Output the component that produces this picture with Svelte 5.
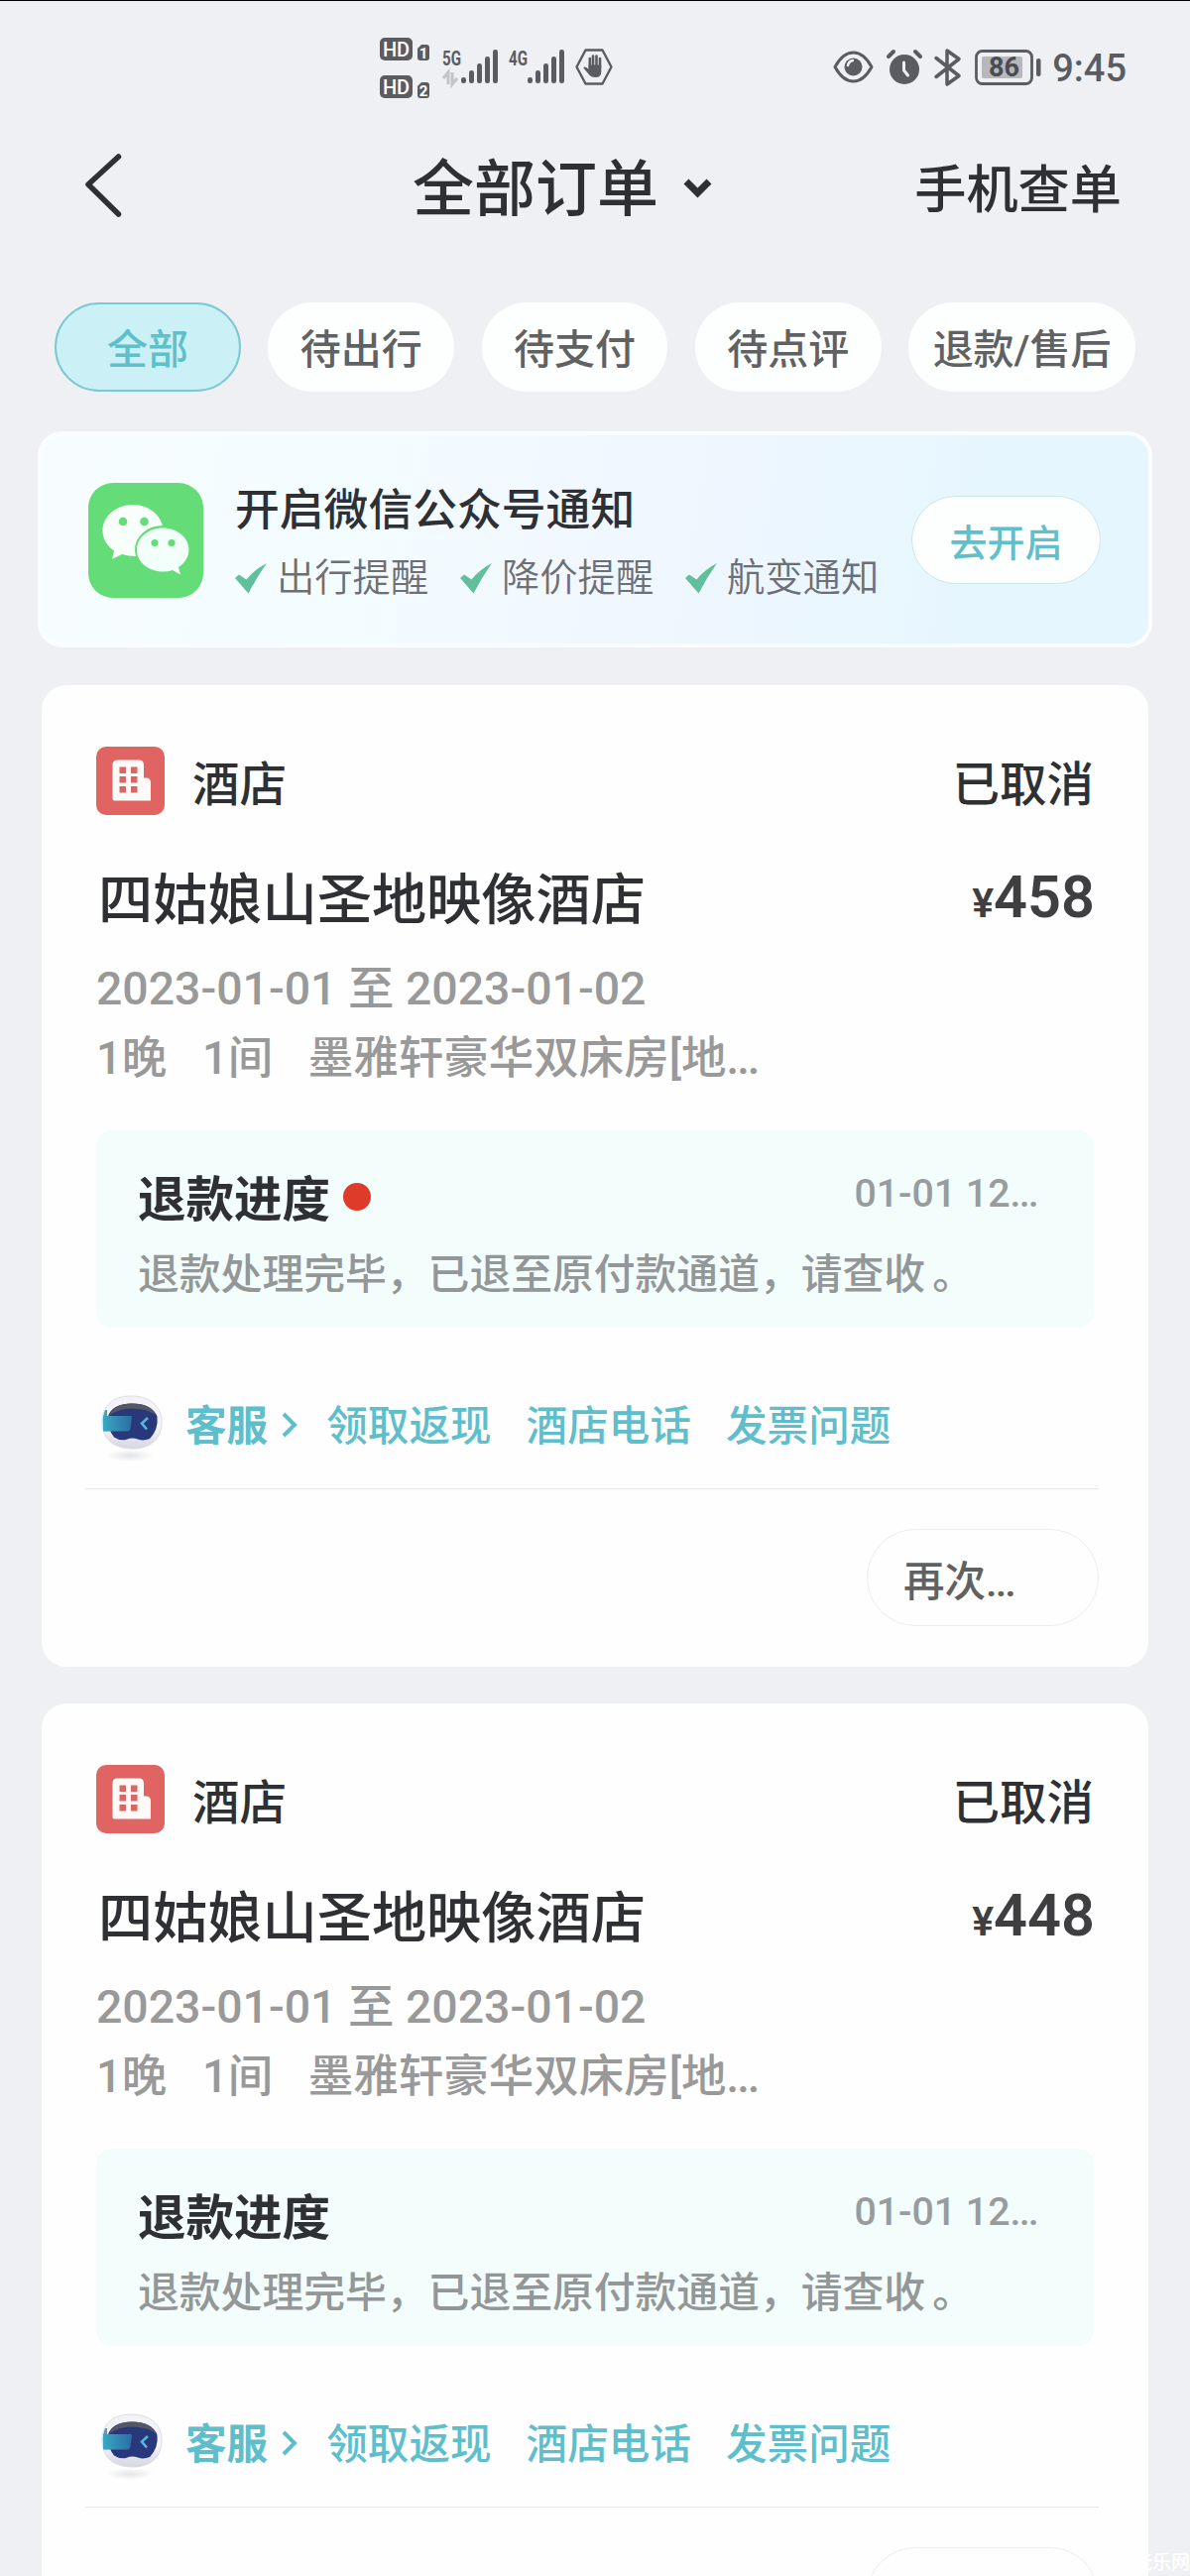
<script>
  let activeTab = 0;

  const tabs = ['全部', '待出行', '待支付', '待点评', '退款/售后'];
  const notices = ['出行提醒', '降价提醒', '航变通知'];
  const links = ['领取返现', '酒店电话', '发票问题'];

  const orders = [
    { id: 1, price: 458, unread: true },
    { id: 2, price: 448, unread: false }
  ];

  const bars = [0, 1, 2, 3, 4];
</script>

<div class="page">
  <div class="status">
    <div class="hd-col">
      {#each [1, 2] as sim}
        <svg width="50" height="24" viewBox="0 0 50 24">
          <rect x="0" y="0" width="33" height="23" rx="5" fill="#5b5c62" />
          <text x="16.5" y="18.5" text-anchor="middle" class="hd-text">HD</text>
          <path d="M38 11l4-4h5q3 0 3 3v10q0 3-3 3h-6q-3 0-3-3z" fill="#5b5c62" />
          <text x="44" y="20.5" text-anchor="middle" class="sim-text">{sim}</text>
        </svg>
      {/each}
    </div>
    {#each ['5G', '4G'] as net, n}
      <svg class="signal" class:second={n === 1} width="56" height="37" viewBox="0 0 56 37">
        <text x="0" y="16.5" class="net-text" textLength="19" lengthAdjust="spacingAndGlyphs">{net}</text>
        {#if n === 0}
          <path d="M1 30l5-6v12M10 24v12l5-6" fill="none" stroke="#c3c4c9" stroke-width="3" />
        {/if}
        {#each bars as b}
          <rect
            x={19 + b * 8}
            y={[29, 22, 15, 8, 1][b]}
            width="5"
            height={[6, 13, 20, 27, 34][b]}
            rx="2.3"
            fill="#5b5c62"
          />
        {/each}
      </svg>
    {/each}
    <svg class="hand" width="38" height="37" viewBox="0 0 38 37">
      <path d="M10.500 1.500h17l9 17-9 17h-17l-9-17z" fill="none" stroke="#5b5c62" stroke-width="2.400" stroke-linejoin="round" />
      <path d="M14.800 19V10M18 18V7.500M21.500 18V7.500M25 19v-9" stroke="#5b5c62" stroke-width="2.600" stroke-linecap="round" />
      <path d="M13.500 16.500h12.800v7q0 5.500-6 5.500-4.500 0-6.500-3l-5.500-6.500q1-1.700 3-.5l2.200 1.800z" fill="#5b5c62" />
    </svg>

    <div class="status-right">
      <svg class="eye" width="41" height="33" viewBox="0 0 41 33">
        <path d="M2 16.500Q10 2 20.500 2T39 16.500Q31 31 20.500 31T2 16.500z" fill="none" stroke="#5b5c62" stroke-width="3" stroke-linejoin="round" />
        <circle cx="20.500" cy="16.500" r="9" fill="#5b5c62" />
        <path d="M15 15q1-4.500 5-5" fill="none" stroke="#eeeff4" stroke-width="2.500" stroke-linecap="round" />
      </svg>
      <svg class="alarm" width="36" height="36" viewBox="0 0 36 36">
        <circle cx="18" cy="20" r="15" fill="#5b5c62" />
        <path d="M2 7l5-5M34 7l-5-5" stroke="#5b5c62" stroke-width="4" stroke-linecap="round" />
        <path d="M17.500 13v8l4 5" fill="none" stroke="#eeeff4" stroke-width="3" stroke-linecap="round" />
      </svg>
      <svg class="bluetooth" width="28" height="38" viewBox="0 0 28 38">
        <path d="M2 9.500l23 18-12 8.500V2l12 8.500L2 28.500" fill="none" stroke="#5b5c62" stroke-width="3.500" stroke-linejoin="round" stroke-linecap="round" />
      </svg>
      <svg class="battery" width="68" height="36" viewBox="0 0 68 36">
        <rect x="1.500" y="1.500" width="56" height="33" rx="6" fill="none" stroke="#5b5c62" stroke-width="2.800" />
        <rect x="7" y="7" width="41" height="22" rx="2" fill="#b7b8bc" />
        <text x="29.500" y="27" text-anchor="middle" class="battery-text">86</text>
        <rect x="62" y="9" width="4.500" height="18" rx="2" fill="#5b5c62" />
      </svg>
      <span class="time">9:45</span>
    </div>
  </div>

  <header>
    <svg class="back" width="38" height="66" viewBox="0 0 38 66">
      <path d="M34.500 4L4 32l30.500 30" fill="none" stroke="#2f3034" stroke-width="5.500" stroke-linecap="round" stroke-linejoin="round" />
    </svg>
    <div class="title">
      <h1>全部订单</h1>
      <svg width="30" height="22" viewBox="0 0 30 22">
        <path d="M3 4l11.500 11.500L26 4" fill="none" stroke="#2f3034" stroke-width="7" />
      </svg>
    </div>
    <span class="lookup">手机查单</span>
  </header>

  <nav>
    {#each tabs as tab, i}
      <button class="tab" class:active={activeTab === i} class:wide={i === 4} on:click={() => (activeTab = i)}>{tab}</button>
    {/each}
  </nav>

  <section class="banner">
    <svg class="wechat" width="116" height="116" viewBox="0 0 116 116">
      <rect width="116" height="116" rx="25" fill="#64dc78" />
      <path d="M45 22C28 22 14.500 33.500 14.500 48.500c0 8 4.500 15 11.500 20L24 77l10-5q6 2 14 2 28-3 28-25C75 33.500 62 22 45 22z" fill="#f8fffb" />
      <ellipse cx="75" cy="67.500" rx="28" ry="24.500" fill="#64dc78" />
      <path d="M75 45.500c-14 0-26 9.500-26 22s12 22 26 22q6 0 10-1.500l8 4.500-2-7.500c6-4 10.500-10 10.500-17.500 0-12.500-12-22-26.500-22z" fill="#f3fffb" />
      <g fill="#64dc78">
        <circle cx="35" cy="39" r="4.300" />
        <circle cx="56.500" cy="39" r="4.300" />
        <circle cx="67" cy="60.500" r="3.600" />
        <circle cx="84" cy="60.500" r="3.600" />
      </g>
    </svg>
    <div class="banner-body">
      <h2>开启微信公众号通知</h2>
      <div class="notices">
        {#each notices as notice}
          <span class="notice">
            <svg width="34" height="32" viewBox="0 0 34 32">
              <path d="M0 16l4-3.500 7.500 5Q20 7 32 1 22 15 13.500 31.500z" fill="#62bf9b" />
            </svg>
            {notice}
          </span>
        {/each}
      </div>
    </div>
    <button class="open">去开启</button>
  </section>

  <main>
    {#each orders as order (order.id)}
      <article class="card">
        <div class="row kind">
          <svg width="69" height="69" viewBox="0 0 69 69">
            <rect width="69" height="69" rx="10" fill="#df6462" />
            <path d="M16.500 18.500q0-5 5-5H43q5 0 5 5v13h2q5 0 5 5v18H18.500q-2 0-2-2z" fill="#fffaf8" />
            <g fill="#d76664">
              {#each [20.5, 30, 40] as y}
                <rect x="23.5" {y} width="6.5" height="6.5" />
                <rect x="35" {y} width="6.5" height="6.5" />
              {/each}
            </g>
          </svg>
          <span class="label">酒店</span>
          <span class="end label">已取消</span>
        </div>
        <div class="row name">
          <h3>四姑娘山圣地映像酒店</h3>
          <span class="end price"><small>¥</small>{order.price}</span>
        </div>
        <p class="dates">2023-01-01 至 2023-01-02</p>
        <p class="room">
          <span>1晚</span><span>1间</span><span>墨雅轩豪华双床房[地<span class="more-dots">...</span></span>
        </p>

        <div class="refund">
          <div class="row">
            <h4>退款进度</h4>
            {#if order.unread}
              <i class="dot"></i>
            {/if}
            <span class="end when">01-01 12<span class="more-dots">...</span></span>
          </div>
          <p>退款处理完毕，已退至原付款通道，请查收<span class="stop">。</span></p>
        </div>

        <div class="row links">
          <svg class="robot" width="70" height="72" viewBox="0 0 70 72">
            <defs>
              <linearGradient id="shell{order.id}" x1="0" y1="0" x2="0" y2="1">
                <stop offset="0" stop-color="#f3f3f7" />
                <stop offset=".6" stop-color="#f4f4f8" />
                <stop offset="1" stop-color="#d5d6df" />
              </linearGradient>
              <radialGradient id="shade{order.id}">
                <stop offset="0" stop-color="#e4e4e8" />
                <stop offset="1" stop-color="#fefefe" />
              </radialGradient>
              <linearGradient id="visor{order.id}" x1="0" x2="1">
                <stop offset="0" stop-color="#3aa8c1" />
                <stop offset="1" stop-color="#2b6da3" />
              </linearGradient>
            </defs>
            <ellipse cx="34" cy="62" rx="24" ry="6" fill="url(#shade{order.id})" />
            <path d="M35 2C55 2 66 13 66 28 66 45 55 55 37 55 18 55 7 46 6 30 5 12 17 2 35 2z" fill="url(#shell{order.id})" stroke="#dcdde5" />
            <path d="M36 9.500q20 0 25.500 13 1.500 13-7.500 22.500-6 2.500-12 .5-6-2-12 .5-7 1-12-2.500-7-9-6.500-20 4-14 24.500-14z" fill="#29377b" />
            <path d="M13 22q5-12.500 23-12.500 18 0 25 12-10-7-25-7-14 0-23 7.500z" fill="#555765" />
            <path d="M9 16q-4 10-1 20l3 2V16z" fill="#3ea6bc" />
            <path d="M7 22h27.500q2 0 1.500 2l-1.500 10.500q-.5 3-3 3H7z" fill="url(#visor{order.id})" />
            <path d="M52 24l-6 5.500 5 6" fill="none" stroke="#52b7dd" stroke-width="2.600" />
          </svg>
          <b>客服</b>
          <svg class="more" width="18" height="28" viewBox="0 0 18 28">
            <path d="M3 3l11 11L3 25" fill="none" stroke="#5fbecb" stroke-width="4" />
          </svg>
          {#each links as link}
            <a href="#{link}">{link}</a>
          {/each}
        </div>

        <div class="actions">
          <button>再次<span class="more-dots">...</span></button>
        </div>
      </article>
    {/each}
  </main>
  <span class="mark">玩乐网</span>
</div>

<style>
  :global(body) {
    background: #eff0f4;
  }

  .page {
    position: relative;
    width: 1200px;
    height: 2598px;
    overflow: hidden;
    box-sizing: border-box;
    border-top: 1px solid #000;
    background: #eff0f4;
    color: #2f3034;
    font-family: Roboto, 'Noto Sans CJK SC', sans-serif;
    font-weight: 500;
  }

  h1, h2, h3, h4, p {
    margin: 0;
    font-weight: 500;
  }

  svg {
    display: block;
    flex: none;
    overflow: visible;
  }

  button {
    font-family: inherit;
    font-weight: inherit;
    padding: 0;
    box-sizing: border-box;
  }

  .row {
    display: flex;
    align-items: center;
  }

  .end {
    margin-left: auto;
  }

  /* tighter than the font's own full stops */
  .more-dots {
    letter-spacing: -0.045em;
  }

  .status {
    display: flex;
    align-items: center;
    height: 133px;
    padding-left: 383px;
  }

  .hd-col {
    display: grid;
    gap: 14px;
    margin: 2px 13px 0 0;
  }

  .hd-text {
    font: 500 20px Roboto, sans-serif;
    fill: #fff;
  }

  .sim-text {
    font: 700 15px Roboto, sans-serif;
    fill: #fff;
  }

  .net-text {
    font: 700 21px Roboto, sans-serif;
    fill: #5b5c62;
  }

  .signal.second {
    margin-left: 11px;
  }

  .hand {
    margin-left: 11px;
  }

  .status-right {
    display: flex;
    align-items: center;
    margin-left: auto;
    padding-right: 64px;
    color: #5b5c62;
  }

  .alarm {
    margin-left: 13px;
  }

  .bluetooth {
    margin-left: 12px;
  }

  .battery {
    margin-left: 13px;
  }

  .battery-text {
    font: 700 27px Roboto, sans-serif;
    fill: #4b4c51;
  }

  .time {
    margin-left: 10px;
    padding-top: 2px;
    font-size: 38px;
    line-height: 44px;
  }

  header {
    display: flex;
    align-items: center;
    height: 112px;
    padding: 0 69px 0 85px;
  }

  .back {
    margin-bottom: 6px;
  }

  .title {
    display: flex;
    align-items: center;
    gap: 25px;
    margin-left: 293px;
  }

  h1 {
    padding-top: 4px;
    font-size: 62px;
    line-height: 80px;
  }

  .lookup {
    margin-left: auto;
    padding-top: 6px;
    font-size: 52.2px;
    line-height: 70px;
  }

  nav {
    display: flex;
    gap: 27.5px;
    padding: 59px 55px 0;
  }

  .tab {
    width: 188px;
    height: 90px;
    padding-top: 5px;
    border: none;
    border-radius: 45px;
    background: #fdfefe;
    color: #606163;
    font-size: 41px;
    line-height: 60px;
    white-space: nowrap;
  }

  .tab.wide {
    width: 229px;
  }

  .tab.active {
    background: #cbf1f6;
    border: 2px solid #7bc9d3;
    color: #5fc0ca;
  }

  .banner {
    display: flex;
    align-items: center;
    box-sizing: border-box;
    width: 1124px;
    height: 218px;
    margin: 40px 0 0 38px;
    padding: 0 48px 0 47px;
    border: 4px solid #f9fdff;
    border-radius: 25px;
    background: linear-gradient(100deg, #f7fdff 5%, #f3fcff 30%, #f1f7ff 50%, #e6f6fe 85%);
  }

  .wechat {
    margin-top: 2px;
  }

  .banner-body {
    margin-left: 32px;
    padding-top: 7px;
  }

  h2 {
    font-size: 44.8px;
    line-height: 60px;
  }

  .notices {
    display: flex;
    margin-top: 10px;
  }

  .notice {
    display: flex;
    align-items: center;
    gap: 8px;
    width: 227px;
    color: #6d6f76;
    font-size: 38.3px;
    font-weight: 350;
    line-height: 56px;
    white-space: nowrap;
  }

  .open {
    width: 191px;
    height: 89px;
    flex: none;
    margin-left: auto;
    border: 1px solid #cbe7ea;
    border-radius: 45px;
    background: #fdffff;
    color: #5fbfcb;
    font-size: 38px;
  }

  main {
    display: flex;
    flex-direction: column;
    gap: 37px;
    padding: 38px 42px 0;
  }

  .card {
    box-sizing: border-box;
    flex: none;
    height: 990px;
    padding: 62px 55px 0;
    border-radius: 25px;
    background: #fefefe;
  }

  .kind {
    height: 69px;
    font-size: 47.5px;
    line-height: 65px;
  }

  .kind svg {
    margin-right: 28px;
  }

  .label {
    padding-top: 9px;
  }

  .name {
    margin-top: 46px;
    height: 80px;
  }

  h3 {
    margin-left: 2px;
    font-size: 55.2px;
    line-height: 80px;
  }

  .price {
    color: #3f3f41;
    font-size: 59.5px;
    font-weight: 600;
    line-height: 80px;
    margin-right: -1px;
  }

  .price small {
    font-size: 41px;
  }

  .dates, .room {
    color: #999;
    font-size: 46.4px;
    line-height: 70px;
  }

  .dates {
    margin-top: 14px;
  }

  .room {
    display: flex;
    gap: 35.5px;
    padding-top: 1px;
    font-size: 45.5px;
  }

  .refund {
    box-sizing: border-box;
    height: 199px;
    margin-top: 37px;
    padding: 36px 57px 0 42px;
    border-radius: 16px;
    background: #f3fdfc;
  }

  h4 {
    padding-top: 2px;
    font-size: 48.5px;
    font-weight: 700;
    line-height: 66px;
  }

  .dot {
    width: 28px;
    height: 28px;
    margin: 0 0 6px 13px;
    border-radius: 50%;
    background: #de3b2a;
  }

  .when {
    padding-bottom: 12px;
    color: #999c9c;
    font-size: 39.3px;
  }

  .refund p {
    margin-top: 12px;
    color: #939797;
    font-size: 41.8px;
    line-height: 60px;
    white-space: nowrap;
  }

  .stop {
    margin-left: 7px;
  }

  .links {
    height: 90px;
    margin-top: 55px;
    color: #5fbecb;
    font-size: 41.6px;
    line-height: 60px;
  }

  .robot {
    margin-top: 5px;
  }

  .links b {
    margin-left: 20px;
    font-weight: 700;
  }

  .more {
    margin: 0 -7px 4px 13px;
  }

  .links a {
    margin-left: 35px;
    color: inherit;
    text-decoration: none;
  }

  .actions {
    display: flex;
    justify-content: flex-end;
    margin: 17px -5px 0 -11px;
    padding-top: 40px;
    border-top: 1.5px solid #e8e8e9;
  }

  .actions button {
    width: 234px;
    height: 98px;
    padding: 1px 0 0 36px;
    border: 1.5px solid #ededee;
    border-radius: 49px;
    background: #fefefe;
    color: #606163;
    font-size: 41.5px;
    text-align: left;
  }

  .mark {
    position: absolute;
    right: 0;
    bottom: 1px;
    color: #fff;
    font-size: 19px;
    line-height: 24px;
  }
</style>
